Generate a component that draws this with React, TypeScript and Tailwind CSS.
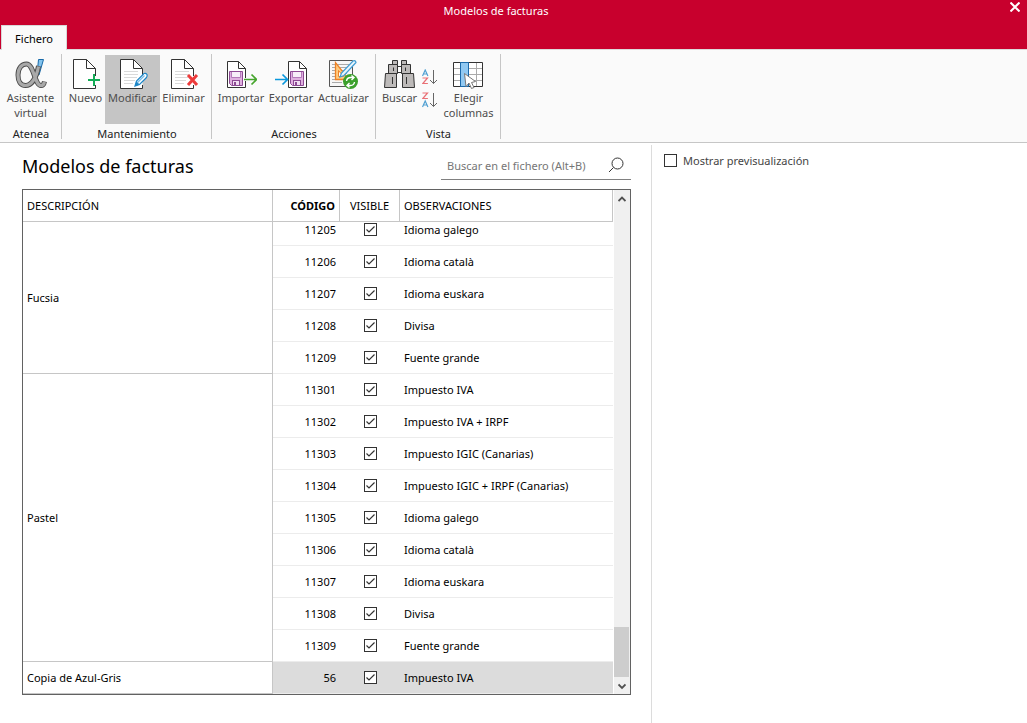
import type { ReactNode } from "react";

const groups = [
  {
    name: "Fucsia",
    rows: [
      { code: "11205", notes: "Idioma galego" },
      { code: "11206", notes: "Idioma català" },
      { code: "11207", notes: "Idioma euskara" },
      { code: "11208", notes: "Divisa" },
      { code: "11209", notes: "Fuente grande" },
    ],
  },
  {
    name: "Pastel",
    rows: [
      { code: "11301", notes: "Impuesto IVA" },
      { code: "11302", notes: "Impuesto IVA + IRPF" },
      { code: "11303", notes: "Impuesto IGIC (Canarias)" },
      { code: "11304", notes: "Impuesto IGIC + IRPF (Canarias)" },
      { code: "11305", notes: "Idioma galego" },
      { code: "11306", notes: "Idioma català" },
      { code: "11307", notes: "Idioma euskara" },
      { code: "11308", notes: "Divisa" },
      { code: "11309", notes: "Fuente grande" },
    ],
  },
  {
    name: "Copia de Azul-Gris",
    rows: [{ code: "56", notes: "Impuesto IVA", selected: true }],
  },
];

function Icon({ children }: { children: ReactNode }) {
  return (
    <svg className="size-8 shrink-0" viewBox="0 0 32 32" fill="none" aria-hidden="true">
      {children}
    </svg>
  );
}

function Page({ lines = false }: { lines?: boolean }) {
  return (
    <>
      <path d="M25.5 20V11.5L16.5 2.5H3.5V31.5H25.5V27" fill="#fff" />
      <path d="M25.5 19V11.5L16.5 2.5H3.5V31.5H25.5V28M16.5 2.5V11.5H25.5" stroke="#333" />
      {lines && <path d="M7 14.5H21M7 17.5H21M7 20.5H20M7 23.5H18M7 26.5H16" stroke="#d9d9d9" />}
    </>
  );
}

function Disk({ x }: { x: number }) {
  return (
    <g transform={`translate(${x} 0)`}>
      <path d="M.5 30.5V4.5H11.5L18.5 11.5V30.5Z" fill="#fff" stroke="#333" />
      <path d="M11.5 4.5V11.5H18.5" stroke="#333" />
      <path d="M2.5 14.5H15.5V28.5H4.5L2.5 26.5Z" fill="#dfb0df" stroke="#8d4a94" />
      <rect x="5" y="15" width="8" height="5" fill="#f7eef8" />
      <path d="M4.5 15V20.5H13.5V15" stroke="#b57abb" />
      <rect x="5.5" y="23.5" width="7" height="5" fill="#f1ddf2" stroke="#8d4a94" />
      <rect x="7" y="25" width="2" height="3" fill="#8d4a94" />
    </g>
  );
}

function AlphaIcon() {
  return (
    <Icon>
      <path d="M23.500 2.500H28.500L24 18H22Z" fill="#82c3ee" stroke="#1769a8" />
      <path
        d="M23.500 9C21.500 20 17 28.500 10.500 28.500C5.500 28.500 3 24 3 18C3 11.500 6.500 7 11.500 7C19 7 19.500 28.500 26 28.500C28 28.500 29 27 29.500 24.500"
        stroke="#4c4c4c"
        strokeWidth="5"
      />
      <path
        d="M23.500 9.500C21.500 20 17 28.500 10.500 28.500C5.500 28.500 3 24 3 18C3 11.500 6.500 7 11.500 7C19 7 19.500 28.500 26 28.500C28 28.500 29 27 29.500 25"
        stroke="#a9a9a9"
        strokeWidth="3.200"
      />
    </Icon>
  );
}

function NewIcon() {
  return (
    <Icon>
      <Page />
      <path d="M24 17V29M18 23H30" stroke="#12ab55" strokeWidth="2" />
    </Icon>
  );
}

function EditIcon() {
  return (
    <Icon>
      <Page lines />
      <path d="M18 29L19.500 24L27 16.500Q29 16 30 17.500Q30.500 19 29.500 20.500L22.500 27.500Z" fill="#fff" stroke="#1c86c7" strokeWidth="1.200" />
      <path d="M18 29L19.500 24L22.500 27.500Z" fill="#1c86c7" />
      <path d="M20.500 25.500L27.500 18.500" stroke="#79bce7" strokeWidth="1.500" />
    </Icon>
  );
}

function DeleteIcon() {
  return (
    <Icon>
      <Page lines />
      <path d="M20 18L29 28M29 18L20 28" stroke="#ed3b3b" strokeWidth="3" />
    </Icon>
  );
}

function ImportIcon() {
  return (
    <Icon>
      <Disk x={2} />
      <path d="M18 22.500H31M26 17.500L31 22.500L26 27.500" stroke="#fafafa" strokeWidth="3" />
      <path d="M19 22.500H31M26.500 17.500L31.500 22.500L26.500 27.500" stroke="#46a52d" strokeWidth="1.700" />
    </Icon>
  );
}

function ExportIcon() {
  return (
    <Icon>
      <Disk x={13} />
      <path d="M0 22.500H12M7.500 17.500L12.500 22.500L7.500 27.500" stroke="#0a98dc" strokeWidth="1.700" />
    </Icon>
  );
}

function UpdateIcon() {
  return (
    <Icon>
      <path d="M1.500 3.500H24.500V29.500H1.500Z" fill="#f7f7f7" stroke="#555" />
      <path d="M4 7.500H21M4 10.500H21M4 13.500H21M4 16.500H19M4 19.500H16M4 22.500H15M4 25.500H14" stroke="#aaa" />
      <path d="M7.500 5.500V22.500H21Z" fill="#ffcc80" stroke="#ed8125" strokeWidth="1.300" />
      <path d="M10.500 13.500V19.500H15.500Z" fill="#fff" stroke="#ed8125" />
      <path d="M12 20L13.500 16L25 4Q27.500 3 28 5.500L16 18.500Z" fill="#e8f5fc" stroke="#3f9bd2" strokeWidth="1.200" />
      <circle cx="22.500" cy="24.500" r="7.500" fill="#3ba02b" />
      <path d="M18.500 24Q19 20.500 22.500 20.500H25M23.500 18.500L26 20.500L23.500 23M26.500 25Q26 28.500 22.500 28.500H20M21.500 26L19 28.500L21.500 30.500" stroke="#fff" strokeWidth="1.400" />
    </Icon>
  );
}

function BinocularsIcon() {
  return (
    <Icon>
      <path d="M13.500 9.500H17.500V15.500H13.500Z" fill="#fff" stroke="#333" />
      <g fill="#bdbab9" stroke="#333">
        <path d="M8.500 3.500H13.500V7.500H8.500ZM17.500 3.500H22.500V7.500H17.500Z" />
        <path d="M4.500 7.500H13.500V16.500H4.500ZM17.500 7.500H26.500V16.500H17.500Z" />
        <path d="M1.500 16.500H12.500V30.500H.5ZM18.500 16.500H29.500L30.500 30.500H18.500Z" />
      </g>
      <path d="M8.500 20V27M22.500 20V27M9.500 10.500V14M21.500 10.500V14" stroke="#333" />
    </Icon>
  );
}

function SortIcon({ down = false }: { down?: boolean }) {
  const letterA = "M0 0L2.700 -6L5.400 0M1 -2H4.400";
  const letterZ = "M0 -6H5L.3 -.5H5.400";

  return (
    <svg className="size-4" viewBox="0 0 16 16" fill="none" aria-hidden="true">
      <g transform="translate(.5 7)">
        <path d={down ? letterZ : letterA} stroke={down ? "#e97076" : "#51a0d2"} strokeWidth="1.200" />
      </g>
      <g transform="translate(.5 15)">
        <path d={down ? letterA : letterZ} stroke={down ? "#51a0d2" : "#e97076"} strokeWidth="1.200" />
      </g>
      <path d="M11.500 1V14.500M8 11L11.500 14.500L15 11" stroke="#666" />
    </svg>
  );
}

function ColumnsIcon() {
  return (
    <Icon>
      <path d="M.5 5.500H29.500V29.500H.5Z" fill="#fff" />
      <path d="M0 11.500H30M0 17.500H30M0 23.500H30M23.500 5V30" stroke="#aaa" />
      <path d="M.5 5.500H29.500V29.500H.5Z" stroke="#333" />
      <path d="M7.500 5.500H15.500V29.500H7.500Z" fill="#91c9f2" stroke="#1b6aab" />
      <path d="M11.500 16.500L13 29.500L16 26L18.500 31.500L21 30.500L18.500 25.500L22.500 24.500Z" fill="#fff" stroke="#777" />
    </Icon>
  );
}

function RibbonGroup({ label, className, children }: { label: string; className: string; children: ReactNode }) {
  return (
    <section className={`mt-1 flex h-[85px] flex-col border-r border-[#c6c6c6] ${className}`} aria-label={label}>
      <div className="flex h-[72px] shrink-0 justify-center pt-px">{children}</div>
      <p className="pl-px text-center text-[#222]">{label}</p>
    </section>
  );
}

function RibbonButton({ label, className, children }: { label: string; className: string; children: ReactNode }) {
  return (
    <button type="button" className={`flex h-[69px] flex-col items-center pt-0.5 text-[#4d4d4d] ${className}`}>
      {children}
      <span className="mt-px">{label}</span>
    </button>
  );
}

function Checkbox({ id, label, checked = false }: { id?: string; label?: string; checked?: boolean }) {
  return (
    <span className="inline-grid place-items-center align-middle">
      <input
        id={id}
        type="checkbox"
        defaultChecked={checked}
        aria-label={label}
        className="peer col-start-1 row-start-1 size-[13px] appearance-none border border-[#333] bg-white"
      />
      <svg
        className="pointer-events-none invisible col-start-1 row-start-1 size-[13px] peer-checked:visible"
        viewBox="0 0 13 13"
        fill="none"
        aria-hidden="true"
      >
        <path d="M2.500 6.500L5 9L10.500 3.500" stroke="#333" strokeWidth="1.200" />
      </svg>
    </span>
  );
}

function Chevron({ d }: { d: string }) {
  return (
    <svg className="size-2" viewBox="0 0 8 8" fill="none" aria-hidden="true">
      <path d={d} stroke="#505050" strokeWidth="1.800" />
    </svg>
  );
}

function ModelsTable() {
  return (
    <div className="flex border border-[#626262]">
      <table className="flex-1 table-fixed border-separate border-spacing-0 text-black">
        <colgroup>
          <col className="w-[250px]" />
          <col className="w-[67px]" />
          <col className="w-[60px]" />
          <col />
        </colgroup>
        <thead>
          <tr className="h-8">
            <th className="border-r border-b border-[#c6c6c6] px-1 text-left font-normal">DESCRIPCIÓN</th>
            <th className="border-r border-b border-[#c6c6c6] px-1 text-right font-bold">CÓDIGO</th>
            <th className="border-r border-b border-[#c6c6c6] text-center font-normal">VISIBLE</th>
            <th className="border-r border-b border-[#c6c6c6] px-1 text-left font-normal">OBSERVACIONES</th>
          </tr>
        </thead>
        <tbody>
          {groups.map((group, groupIndex) =>
            group.rows.map((row, index) => {
              // the top row is partly scrolled under the header
              const cell = groupIndex === 0 && index === 0 ? "h-6 pb-2" : "h-8";

              return (
                <tr key={row.code} className={"selected" in row ? "bg-[#dcdcdc]" : "bg-white"}>
                  {index === 0 && (
                    <td rowSpan={group.rows.length} className="border-r border-b border-[#c6c6c6] bg-white px-1">
                      {group.name}
                    </td>
                  )}
                  <td className={`border-b border-[#ececec] pr-1 text-right ${cell}`}>{row.code}</td>
                  <td className={`border-b border-[#ececec] text-center leading-none ${cell}`}>
                    <Checkbox label={`Visible ${row.code}`} checked />
                  </td>
                  <td className={`border-b border-[#ececec] px-1 ${cell}`}>{row.notes}</td>
                </tr>
              );
            }),
          )}
        </tbody>
      </table>
      <div className="ml-px flex w-4 flex-col bg-[#f0f0f0]">
        <button type="button" aria-label="Subir" className="grid h-[18px] place-items-center pr-px">
          <Chevron d="M.5 6L4 2.500L7.500 6" />
        </button>
        <div className="flex flex-1 flex-col justify-end pr-px">
          <div className="h-[50px] bg-[#cdcdcd]" />
        </div>
        <button type="button" aria-label="Bajar" className="grid h-[17px] place-items-center pr-px">
          <Chevron d="M.5 2.500L4 6L7.500 2.500" />
        </button>
      </div>
    </div>
  );
}

export default function App() {
  return (
    <div className="flex min-h-screen flex-col bg-white font-['Noto_Sans','Open_Sans',sans-serif] text-[11px] leading-[15px]">
      <header className="bg-[#c8002d]">
        <div className="flex h-[25px] items-start">
          <h1 className="flex-1 pt-[3px] text-center text-white">Modelos de facturas</h1>
          <button type="button" aria-label="Cerrar" className="flex w-[35px] justify-end pt-0.5 pr-[7px]">
            <svg className="size-[10px]" viewBox="0 0 10 10" fill="none" aria-hidden="true">
              <path d="M.5 .5L9.500 9.500M9.500 .5L.5 9.500" stroke="#fff" strokeWidth="2" />
            </svg>
          </button>
        </div>
        <div className="flex pl-px">
          <button type="button" className="z-10 -mb-px h-[25px] w-[66px] border border-b-0 border-[#d8d8d8] bg-[#fafafa] text-black">
            Fichero
          </button>
        </div>
      </header>

      <div className="flex h-[94px] border-y border-t-[#dcdcdc] border-b-[#c6c6c6] bg-[#fafafa]">
        <RibbonGroup label="Atenea" className="w-[62px]">
          <RibbonButton label="Asistente virtual" className="w-[54px]">
            <AlphaIcon />
          </RibbonButton>
        </RibbonGroup>
        <RibbonGroup label="Mantenimiento" className="w-[150px]">
          <RibbonButton label="Nuevo" className="w-[39px]">
            <NewIcon />
          </RibbonButton>
          <RibbonButton label="Modificar" className="w-[55px] bg-[#c5c5c5]">
            <EditIcon />
          </RibbonButton>
          <RibbonButton label="Eliminar" className="w-[47px]">
            <DeleteIcon />
          </RibbonButton>
        </RibbonGroup>
        <RibbonGroup label="Acciones" className="w-[164px]">
          <RibbonButton label="Importar" className="w-[50px]">
            <ImportIcon />
          </RibbonButton>
          <RibbonButton label="Exportar" className="w-[50px]">
            <ExportIcon />
          </RibbonButton>
          <RibbonButton label="Actualizar" className="w-[55px]">
            <UpdateIcon />
          </RibbonButton>
        </RibbonGroup>
        <RibbonGroup label="Vista" className="w-[125px]">
          <RibbonButton label="Buscar" className="w-[39px]">
            <BinocularsIcon />
          </RibbonButton>
          <div className="flex w-[22px] flex-col items-center gap-[7px] pt-[14px]">
            <button type="button" aria-label="Orden ascendente">
              <SortIcon />
            </button>
            <button type="button" aria-label="Orden descendente">
              <SortIcon down />
            </button>
          </div>
          <RibbonButton label="Elegir columnas" className="w-[55px]">
            <ColumnsIcon />
          </RibbonButton>
        </RibbonGroup>
      </div>

      <main className="grid flex-1 grid-cols-[652fr_375fr] pt-0.5">
        <section className="border-r border-[#dcdcdc] pr-5 pl-[22px]">
          <div className="mb-2 flex h-9 items-end justify-between pb-px">
            <h2 className="pb-0.5 text-[18px] leading-6 text-black">Modelos de facturas</h2>
            <div className="flex w-[190px] items-center border-b border-[#808080] pb-[5px] pl-1.5">
              <input
                type="search"
                aria-label="Buscar en el fichero"
                placeholder="Buscar en el fichero (Alt+B)"
                className="min-w-0 flex-1 outline-none placeholder:text-[#767676]"
              />
              <button type="button" aria-label="Buscar" className="mr-1.5">
                <svg className="size-[18px]" viewBox="0 0 18 18" fill="none" aria-hidden="true">
                  <circle cx="10.500" cy="7.500" r="5.500" stroke="#333" />
                  <path d="M6.500 11.500L2 16" stroke="#333" />
                </svg>
              </button>
            </div>
          </div>
          <ModelsTable />
        </section>

        <section className="pt-2 pl-3">
          <div className="flex items-center gap-1.5">
            <Checkbox id="preview" />
            <label htmlFor="preview" className="text-[#444]">
              Mostrar previsualización
            </label>
          </div>
        </section>
      </main>
    </div>
  );
}
